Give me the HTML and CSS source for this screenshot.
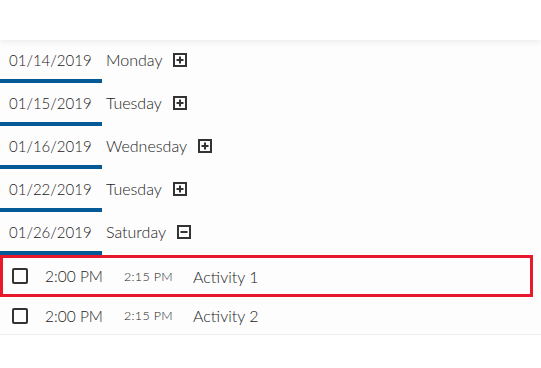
FILE: index.html
```html
<!doctype html>
<html>
<head>
  <link rel="stylesheet" href="styles.css">
</head>
<body>
  <div class="topbar"></div>

  <div class="schedule">
    <div class="day">
      <span class="date">01/14/2019</span>
      <span class="weekday">Monday</span>
      <svg class="toggle" width="14" height="14" viewBox="0 0 14 14"><rect x="1" y="1" width="12" height="12" fill="none" stroke="#333" stroke-width="2"/><path d="M3.5 7h7M7 3.5v7" stroke="#333" stroke-width="2"/></svg>
    </div>
    <div class="day">
      <span class="date">01/15/2019</span>
      <span class="weekday">Tuesday</span>
      <svg class="toggle" width="14" height="14" viewBox="0 0 14 14"><rect x="1" y="1" width="12" height="12" fill="none" stroke="#333" stroke-width="2"/><path d="M3.5 7h7M7 3.5v7" stroke="#333" stroke-width="2"/></svg>
    </div>
    <div class="day">
      <span class="date">01/16/2019</span>
      <span class="weekday">Wednesday</span>
      <svg class="toggle" width="14" height="14" viewBox="0 0 14 14"><rect x="1" y="1" width="12" height="12" fill="none" stroke="#333" stroke-width="2"/><path d="M3.5 7h7M7 3.5v7" stroke="#333" stroke-width="2"/></svg>
    </div>
    <div class="day">
      <span class="date">01/22/2019</span>
      <span class="weekday">Tuesday</span>
      <svg class="toggle" width="14" height="14" viewBox="0 0 14 14"><rect x="1" y="1" width="12" height="12" fill="none" stroke="#333" stroke-width="2"/><path d="M3.5 7h7M7 3.5v7" stroke="#333" stroke-width="2"/></svg>
    </div>
    <div class="day open">
      <span class="date">01/26/2019</span>
      <span class="weekday">Saturday</span>
      <svg class="toggle" width="14" height="14" viewBox="0 0 14 14"><rect x="1" y="1" width="12" height="12" fill="none" stroke="#333" stroke-width="2"/><path d="M3.5 7h7" stroke="#333" stroke-width="2"/></svg>
    </div>

    <div class="activities">
      <div class="activity selected">
        <span class="check"></span>
        <span class="start">2:00 PM</span>
        <span class="end">2:15 PM</span>
        <span class="name">Activity 1</span>
      </div>
      <div class="activity">
        <span class="check"></span>
        <span class="start">2:00 PM</span>
        <span class="end">2:15 PM</span>
        <span class="name">Activity 2</span>
      </div>
    </div>
  </div>
</body>
</html>
```

FILE: styles.css
```css
body{
  margin: 0;
  background-color: #ffffff;
  font-family: Lato, "Noto Sans", sans-serif;
  font-weight: 300;
  color: #222222;
}
.topbar{
  height: 40px;
  background-color: #ffffff;
  box-shadow: 0 2px 6px rgba(0, 0, 0, 0.07);
  position: relative;
}
.schedule{
  background-color: #fdfdfd;
}
.day{
  display: flex;
  align-items: center;
  height: 43px;
  font-size: 15px;
}
.date{
  box-sizing: border-box;
  width: 102px;
  height: 43px;
  padding-left: 9px;
  display: flex;
  align-items: center;
  border-bottom: 4px solid #045a96;
}
.weekday{
  padding-left: 4px;
  padding-bottom: 4px;
  font-size: 16px;
}
.toggle{
  margin-left: 11px;
  margin-bottom: 4px;
}
.activity{
  display: flex;
  align-items: center;
  height: 37px;
  border-bottom: 1px solid #ececec;
  font-size: 16px;
}
.activity.selected{
  height: 36px;
  width: 527px;
  border: 3px solid #e8192b;
}
.check{
  box-sizing: border-box;
  width: 16px;
  height: 16px;
  border: 2px solid #333333;
  border-radius: 2px;
  margin-left: 12px;
}
.selected .check{
  margin-left: 9px;
}
.start{
  margin-left: 17px;
  width: 62px;
  font-size: 15.5px;
}
.end{
  margin-left: 17px;
  width: 52px;
  font-size: 12.5px;
  letter-spacing: 0.3px;
}
.name{
  margin-left: 17px;
}
```
